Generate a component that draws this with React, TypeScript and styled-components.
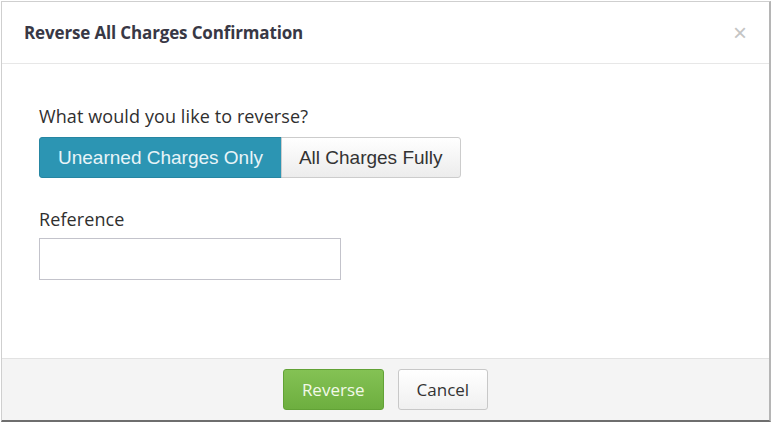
import React from 'react';
import styled, { createGlobalStyle } from 'styled-components';

const GlobalStyle = createGlobalStyle`
  html, body {
    margin: 0;
    padding: 0;
    background: #ffffff;
  }
  * {
    box-sizing: border-box;
  }
`;

const Frame = styled.div`
  width: 772px;
  height: 423px;
  padding: 1px;
  background: #ffffff;
`;

const Modal = styled.div`
  display: flex;
  flex-direction: column;
  height: 421px;
  width: 770px;
  border-top: 1px solid #cfcfcf;
  border-left: 1px solid #cfcfcf;
  border-right: 2px solid #b5b5b5;
  border-bottom: 2px solid #6e6e6e;
  background: #ffffff;
`;

const Header = styled.div`
  display: flex;
  align-items: center;
  justify-content: space-between;
  height: 62px;
  padding: 0 22px 0 22px;
  border-bottom: 1px solid #e7e7e7;
`;

const Title = styled.h4`
  margin: 0;
  font-family: 'Open Sans', sans-serif;
  font-weight: 700;
  font-size: 17px;
  letter-spacing: -0.15px;
  color: #383845;
`;

const Close = styled.button`
  border: none;
  background: none;
  padding: 0;
  font-family: 'Liberation Sans', Arial, sans-serif;
  font-size: 24px;
  line-height: 1;
  color: #c4c4c4;
  cursor: pointer;
`;

const Body = styled.div`
  flex: 1;
  display: flex;
  flex-direction: column;
  padding: 41px 37px 0;
`;

const Label = styled.div<{ gap: number }>`
  font-family: 'Open Sans', sans-serif;
  font-size: 18px;
  letter-spacing: 0.1px;
  color: #2f2f2f;
  line-height: 22px;
  margin-bottom: ${(p) => p.gap}px;
`;

const Group = styled.div`
  display: flex;
  margin-bottom: 30px;
`;

const Toggle = styled.button<{ active?: boolean }>`
  height: 41px;
  padding: 0 ${(p) => (p.active ? '18px' : '17px')};
  font-family: 'Liberation Sans', Arial, sans-serif;
  font-size: 19px;
  color: ${(p) => (p.active ? '#e8f4f8' : '#333333')};
  background: ${(p) =>
    p.active ? '#2c95b3' : 'linear-gradient(#ffffff, #ececec)'};
  border: 1px solid ${(p) => (p.active ? '#2686a2' : '#cccccc')};
  border-radius: ${(p) => (p.active ? '3px 0 0 3px' : '0 3px 3px 0')};
  margin-left: ${(p) => (p.active ? '0' : '-1px')};
  cursor: pointer;
`;

const Input = styled.input`
  width: 302px;
  height: 42px;
  border: 1px solid #c3c3cb;
  background: #ffffff;
  padding: 0 10px;
  font-family: 'Liberation Sans', Arial, sans-serif;
  font-size: 16px;
  outline: none;
`;

const Footer = styled.div`
  display: flex;
  justify-content: center;
  align-items: center;
  gap: 14px;
  height: 62px;
  border-top: 1px solid #e2e2e2;
  background: #f4f4f4;
`;

const Action = styled.button<{ primary?: boolean }>`
  height: 41px;
  padding: 0 18px;
  font-family: 'Open Sans', sans-serif;
  font-size: 17px;
  color: ${(p) => (p.primary ? '#f2f9e8' : '#333333')};
  background: ${(p) =>
    p.primary ? 'linear-gradient(#84c254, #6dae3f)' : 'linear-gradient(#ffffff, #f0f0f0)'};
  border: 1px solid ${(p) => (p.primary ? '#62a236' : '#c8c8c8')};
  border-radius: 3px;
  cursor: pointer;
`;

export default function App() {
  return (
    <>
      <GlobalStyle />
      <Frame>
        <Modal>
          <Header>
            <Title>Reverse All Charges Confirmation</Title>
            <Close aria-label="Close">×</Close>
          </Header>
          <Body>
            <Label gap={10}>What would you like to reverse?</Label>
            <Group>
              <Toggle active>Unearned Charges Only</Toggle>
              <Toggle>All Charges Fully</Toggle>
            </Group>
            <Label gap={8}>Reference</Label>
            <Input type="text" />
          </Body>
          <Footer>
            <Action primary>Reverse</Action>
            <Action>Cancel</Action>
          </Footer>
        </Modal>
      </Frame>
    </>
  );
}
